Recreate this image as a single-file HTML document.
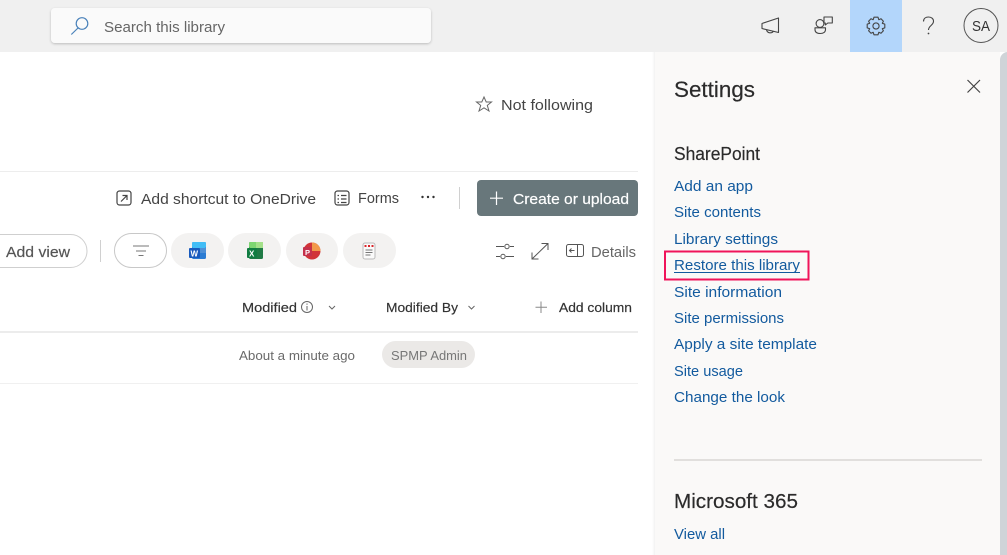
<!DOCTYPE html>
<html lang="en">
<head>
<meta charset="utf-8">
<title>Settings</title>
<style>
html,body{margin:0;padding:0;width:1007px;height:555px;overflow:hidden;background:#fff}
svg{display:block}
text{font-family:"Liberation Sans",sans-serif;font-size:15px}
.semi{stroke-width:.18px}
.lnk{fill:#125a9e}
</style>
</head>
<body>
<svg width="1007" height="555" viewBox="0 0 1007 555" xmlns="http://www.w3.org/2000/svg">
<defs>
<filter id="s" x="-5%" y="-30%" width="110%" height="170%"><feDropShadow dx="0" dy="1" stdDeviation="1.2" flood-color="#000" flood-opacity=".22"/></filter>
<linearGradient id="pg" x1="0" x2="1"><stop offset="0" stop-color="#000" stop-opacity="0"/><stop offset="1" stop-color="#000" stop-opacity=".05"/></linearGradient>
</defs>
<rect width="1007" height="555" fill="#fff"/>
<!-- top bar -->
<rect width="1007" height="52" fill="#f0f0f0"/>
<rect x="850" width="52" height="52" fill="#b3d6fb"/>
<rect x="51" y="8" width="380" height="35" rx="4" fill="#fafafa" filter="url(#s)"/>
<g fill="none" stroke="#4a82ba" stroke-width="1.2"><circle cx="82" cy="23.500" r="5.800"/><path d="M78 28L71.300 34.500"/></g>
<text x="104" y="32" fill="#666" textLength="121" lengthAdjust="spacingAndGlyphs">Search this library</text>

<g fill="none" stroke="#444" stroke-width="1.100" stroke-linejoin="round">
<path d="M778.500 18V32.500L762 28.500V23.500Z"/><path d="M766.500 29.500C767 33.500 772 33.800 773.500 31"/>
<circle cx="820" cy="23.500" r="3.900"/><path d="M815 27.800H825.500V29.500C825.500 32 823.500 33.500 820.200 33.500S815 32 815 29.500Z"/><path d="M824 17H832.300V23H827.800L825.300 25V23H824Z"/>
<g transform="translate(876 26)"><circle r="3.100"/><path d="M-2-8.800H2L2.800-6.300L5-7.300L7.400-4.800L6.300-2.700L8.800-1.900V1.900L6.300 2.700L7.400 4.800L5 7.300L2.800 6.300L2 8.800H-2L-2.800 6.300L-5 7.300L-7.400 4.800L-6.300 2.700L-8.800 1.900V-1.900L-6.300-2.700L-7.400-4.800L-5-7.300L-2.800-6.300Z"/></g>
<path d="M923.500 21.500C923.500 18.300 926 17 928.500 17C931.500 17 933.500 18.800 933.500 21.300C933.500 25.500 928.500 25.500 928.500 30"/>
<circle cx="981" cy="25.500" r="17" stroke="#555" stroke-width="1"/>
</g>
<circle cx="928.500" cy="33.500" r=".9" fill="#444"/>
<text x="972" y="31" fill="#333" textLength="18" lengthAdjust="spacingAndGlyphs">SA</text>

<!-- main -->
<g fill="none" stroke="#666" stroke-width="1"><path d="M484 97L486.200 102H491.500L487.300 105.400L489 111L484 107.800L479 111L480.700 105.400L476.500 102H481.800Z"/></g>
<text x="501" y="110" fill="#444" textLength="92" lengthAdjust="spacingAndGlyphs">Not following</text>
<rect x="0" y="171" width="638" height="1" fill="#ededed"/>

<g fill="none" stroke="#444" stroke-width="1.200"><rect x="117" y="191" width="14" height="14" rx="2.500"/><path d="M121 201.500L127 195.500M122.500 195.500H127V200"/>
<rect x="335" y="191" width="14" height="14" rx="2.500"/><path d="M341 195.500H346.500M341 199H346.500M341 202.500H346.500M337.500 195.500H339M337.500 199H339M337.500 202.500H339"/></g>
<text x="141" y="204" fill="#444" textLength="175" lengthAdjust="spacingAndGlyphs">Add shortcut to OneDrive</text>
<text x="358" y="203" fill="#444" textLength="41" lengthAdjust="spacingAndGlyphs">Forms</text>
<g fill="#333"><circle cx="422.500" cy="197" r="1.200"/><circle cx="428" cy="197" r="1.200"/><circle cx="433.500" cy="197" r="1.200"/></g>
<rect x="459" y="187" width="1" height="22" fill="#d0d0d0"/>
<rect x="477" y="180" width="161" height="36" rx="4" fill="#68777b"/>
<path d="M496.500 191.500V205M490 198.200H503" stroke="#fff" stroke-width="1.200" fill="none"/>
<text class="semi" x="513" y="204" fill="#fff" stroke="#fff" textLength="116" lengthAdjust="spacingAndGlyphs">Create or upload</text>

<!-- view row -->
<rect x="-30" y="234.500" width="117" height="33" rx="16.500" fill="#fff" stroke="#cfcfcf"/>
<text class="semi" x="6" y="257" fill="#555" stroke="#555" textLength="64" lengthAdjust="spacingAndGlyphs">Add view</text>
<rect x="100" y="240" width="1" height="22" fill="#d0d0d0"/>
<rect x="114.500" y="233.500" width="52" height="34" rx="17" fill="#fff" stroke="#c8c8c8"/>
<path d="M133 246H149M136 251H146M138.500 255.500H143.500" stroke="#777" stroke-width="1.100" fill="none"/>
<rect x="171" y="233" width="53" height="35" rx="17.500" fill="#f3f2f1"/>
<rect x="228" y="233" width="53" height="35" rx="17.500" fill="#f3f2f1"/>
<rect x="286" y="233" width="52" height="35" rx="17.500" fill="#f3f2f1"/>
<rect x="343" y="233" width="53" height="35" rx="17.500" fill="#f3f2f1"/>
<!-- word -->
<rect x="192" y="242" width="14" height="17" rx="1.500" fill="#2b7cd3"/><rect x="192" y="242" width="14" height="6" rx="1.500" fill="#41bdf6"/><rect x="198" y="248" width="8" height="5" fill="#4e8fd6"/><rect x="189" y="248" width="11" height="10" rx="1" fill="#185abd"/>
<text x="190.500" y="256.500" fill="#fff" style="font-size:8px;font-weight:bold">W</text>
<!-- excel -->
<rect x="249" y="242" width="14" height="17" rx="1.500" fill="#1f7a45"/><rect x="249" y="242" width="14" height="6" rx="1.500" fill="#7ed672"/><rect x="256" y="242" width="7" height="6" fill="#a4e08a"/><rect x="247" y="248" width="10" height="10" rx="1" fill="#107c41"/>
<text x="249" y="256.500" fill="#fff" style="font-size:8px;font-weight:bold">X</text>
<!-- ppt -->
<circle cx="312" cy="251" r="8.500" fill="#d13438"/><path d="M312 251V242.500A8.500 8.500 0 0 1 320.500 251Z" fill="#f2994a"/><rect x="303" y="247" width="9" height="9" rx="1" fill="#c4314b"/>
<text x="305" y="255" fill="#fff" style="font-size:7.500px;font-weight:bold">P</text>
<!-- pdf -->
<rect x="363" y="243" width="12" height="16" rx="2" fill="#fafafa" stroke="#bbb"/><g fill="#d9252a"><rect x="364.500" y="245" width="2" height="2"/><rect x="368" y="245" width="2" height="2"/><rect x="371.500" y="245" width="2" height="2"/></g><path d="M365.500 250H372.500M365.500 252.500H372.500M365.500 255H370.500" stroke="#777" fill="none"/>

<g fill="none" stroke="#555" stroke-width="1">
<path d="M496 246.500H504M510 246.500H514M496 256.500H500M506 256.500H514"/><circle cx="507" cy="246.500" r="2.200"/><circle cx="503" cy="256.500" r="2.200"/>
<path d="M532 259L548 243.500M541.500 243.500H548V250M532 252.500V259H538.500"/>
<rect x="566.500" y="244.500" width="17" height="12" rx="2"/><path d="M577.500 244.500V256.500M574.500 250.500H569.500M571.500 248.500L569.500 250.500L571.500 252.500"/>
</g>
<text x="591" y="257" fill="#666" textLength="45" lengthAdjust="spacingAndGlyphs">Details</text>

<!-- columns -->
<text class="semi" x="242" y="312" fill="#333" stroke="#333" style="font-size:13px" textLength="55" lengthAdjust="spacingAndGlyphs">Modified</text>
<text class="semi" x="386" y="312" fill="#333" stroke="#333" style="font-size:13px" textLength="72" lengthAdjust="spacingAndGlyphs">Modified By</text>
<text class="semi" x="559" y="312" fill="#333" stroke="#333" style="font-size:13px" textLength="73" lengthAdjust="spacingAndGlyphs">Add column</text>
<text x="239" y="360" fill="#6a6a6a" style="font-size:13px" textLength="116" lengthAdjust="spacingAndGlyphs">About a minute ago</text>
<rect x="382" y="341" width="93" height="27" rx="13.500" fill="#ebe9e7"/>
<text x="391" y="360" fill="#777" style="font-size:13px" textLength="76" lengthAdjust="spacingAndGlyphs">SPMP Admin</text>
<g fill="none" stroke="#666" stroke-width="1">
<circle cx="307" cy="307" r="5.500"/><path d="M307 306V310.500M307 303.500V304.700"/>
<path d="M329 306L332 309L335 306M468.500 306L471.500 309L474.500 306"/>
<path d="M541 301.500V313M535.500 307.200H547" stroke="#888"/>
</g>
<rect x="0" y="331" width="638" height="2" fill="#ececec"/>
<rect x="0" y="383" width="638" height="1" fill="#f0f0f0"/>

<!-- panel -->
<rect x="652" y="52" width="3" height="503" fill="url(#pg)"/>
<rect x="655" y="52" width="345" height="503" fill="#faf9f8"/>
<path d="M1000 60A8 8 0 0 1 1007 52V555H1000Z" fill="#cfd4d8"/>
<text class="semi" x="674" y="97" fill="#2b2b2b" stroke="#2b2b2b" style="font-size:22px" textLength="81" lengthAdjust="spacingAndGlyphs">Settings</text>
<path d="M967.500 80L980 92.500M980 80L967.500 92.500" stroke="#444" stroke-width="1.200" fill="none"/>
<text class="semi" x="674" y="160" fill="#2b2b2b" stroke="#2b2b2b" style="font-size:18px" textLength="86" lengthAdjust="spacingAndGlyphs">SharePoint</text>
<text class="lnk" x="674" y="191" textLength="79" lengthAdjust="spacingAndGlyphs">Add an app</text>
<text class="lnk" x="674" y="217" textLength="87" lengthAdjust="spacingAndGlyphs">Site contents</text>
<text class="lnk" x="674" y="244" textLength="104" lengthAdjust="spacingAndGlyphs">Library settings</text>
<text class="lnk" x="674" y="270" textLength="126" lengthAdjust="spacingAndGlyphs">Restore this library</text>
<rect x="674" y="272" width="126" height="1" fill="#125a9e"/>
<rect x="665" y="251.500" width="143.500" height="28" fill="none" stroke="#f0145a" stroke-width="2"/>
<text class="lnk" x="674" y="297" textLength="108" lengthAdjust="spacingAndGlyphs">Site information</text>
<text class="lnk" x="674" y="323" textLength="110" lengthAdjust="spacingAndGlyphs">Site permissions</text>
<text class="lnk" x="674" y="349" textLength="143" lengthAdjust="spacingAndGlyphs">Apply a site template</text>
<text class="lnk" x="674" y="376" textLength="69" lengthAdjust="spacingAndGlyphs">Site usage</text>
<text class="lnk" x="674" y="402" textLength="111" lengthAdjust="spacingAndGlyphs">Change the look</text>
<rect x="674" y="459" width="308" height="2" fill="#e1dfdd"/>
<text class="semi" x="674" y="508" fill="#2b2b2b" stroke="#2b2b2b" style="font-size:20px" textLength="124" lengthAdjust="spacingAndGlyphs">Microsoft 365</text>
<text class="lnk" x="674" y="539" textLength="51" lengthAdjust="spacingAndGlyphs">View all</text>
</svg>
</body>
</html>
